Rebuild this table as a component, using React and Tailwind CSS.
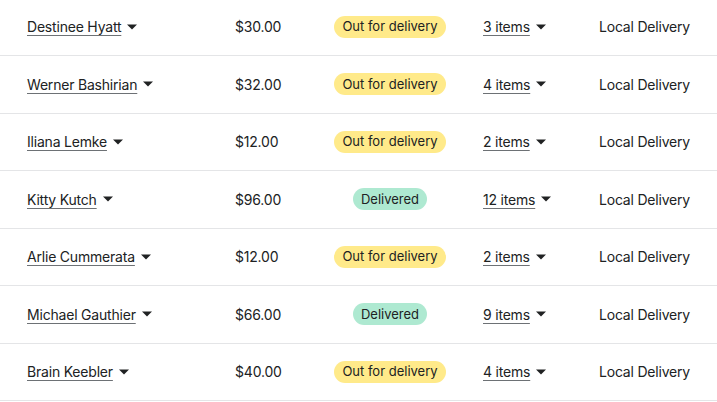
import React from "react";

const orders = [
  { name: "Destinee Hyatt", total: "$30.00", status: "out", items: "3 items" },
  { name: "Werner Bashirian", total: "$32.00", status: "out", items: "4 items" },
  { name: "Iliana Lemke", total: "$12.00", status: "out", items: "2 items" },
  { name: "Kitty Kutch", total: "$96.00", status: "done", items: "12 items" },
  { name: "Arlie Cummerata", total: "$12.00", status: "out", items: "2 items" },
  { name: "Michael Gauthier", total: "$66.00", status: "done", items: "9 items" },
  { name: "Brain Keebler", total: "$40.00", status: "out", items: "4 items" },
];

const Caret = () => (
  <svg className="ml-[6px] w-[10px] h-[6px]" viewBox="0 0 10 6" aria-hidden="true">
    <path d="M0 0.5h10L5 5.5z" fill="#202223" />
  </svg>
);

const Badge = ({ status }) =>
  status === "out" ? (
    <span className="inline-flex items-center h-[22px] px-[8px] rounded-full bg-[#ffea8a] text-[13px] tracking-normal text-[#202223]">
      Out for delivery
    </span>
  ) : (
    <span className="inline-flex items-center h-[22px] px-[8px] rounded-full bg-[#aee9d1] text-[13px] tracking-normal text-[#202223]">
      Delivered
    </span>
  );

export default function App() {
  return (
    <div
      className="bg-white w-[717px] h-[402px] overflow-hidden text-[14px] tracking-[-0.2px] text-[#202223]"
      style={{ fontFamily: "Inter, 'Noto Sans', sans-serif" }}
    >
      <div className="-mt-[1.5px]">
        {orders.map((o) => (
          <div
            key={o.name}
            className="flex items-center h-[57.5px] border-b border-[#e4e5e7] pl-[27px]"
          >
            <div className="w-[208px] flex items-center">
              <span className="underline underline-offset-[3px] decoration-[#6d7175]">{o.name}</span>
              <Caret />
            </div>
            <div className="w-[85px]">{o.total}</div>
            <div className="w-[140px] flex justify-center">
              <Badge status={o.status} />
            </div>
            <div className="w-[139px] pl-[23px] flex items-center">
              <span className="underline underline-offset-[3px] decoration-[#6d7175]">{o.items}</span>
              <Caret />
            </div>
            <div>Local Delivery</div>
          </div>
        ))}
      </div>
    </div>
  );
}
